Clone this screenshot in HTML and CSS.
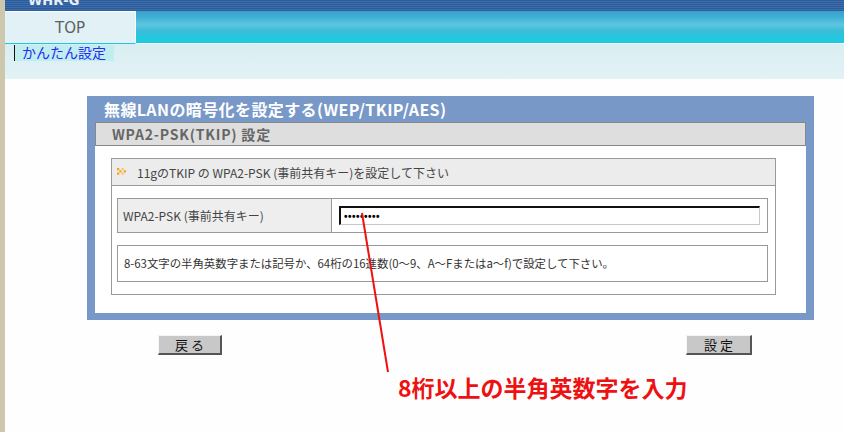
FILE: index.html
```html
<!DOCTYPE html>
<html lang="ja">
<head>
    <meta charset="UTF-8">
    <title>無線LANの暗号化を設定する</title>
    <link rel="stylesheet" href="styles.css">
</head>
<body>
    <div class="side-strip"></div>
    <div class="page">
        <div class="top-band"><span class="model">WHR-G</span></div>
        <div class="nav">
            <div class="tab">TOP</div>
            <div class="nav-fill"></div>
        </div>
        <div class="sub-nav"><span class="crumb">かんたん設定</span></div>

        <div class="content">
            <div class="panel">
                <div class="panel-title">無線LANの暗号化を設定する(WEP/TKIP/AES)</div>
                <div class="panel-head">WPA2-PSK(TKIP) 設定</div>
                <div class="panel-body">
                    <div class="inner">
                        <div class="inner-head">
                            <svg class="mark" width="8" height="8" viewBox="0 0 8 8">
                                <rect x="0" y="0" width="2" height="2" fill="#f7a21b"/>
                                <rect x="2" y="2" width="2" height="2" fill="#f7a21b"/>
                                <rect x="0" y="4" width="2" height="2" fill="#f7a21b"/>
                                <rect x="4" y="0" width="2" height="2" fill="#fbc46a"/>
                                <rect x="6" y="2" width="2" height="2" fill="#f7a21b"/>
                                <rect x="4" y="4" width="2" height="2" fill="#fbc46a"/>
                            </svg>
                            <span>11gのTKIP の WPA2-PSK (事前共有キー)を設定して下さい</span>
                        </div>
                        <div class="inner-body">
                            <div class="field-row">
                                <div class="field-label">WPA2-PSK (事前共有キー)</div>
                                <div class="field-value">
                                    <input class="key-input" type="password" value="123456789">
                                </div>
                            </div>
                            <div class="note">8-63文字の半角英数字または記号か、64桁の16進数(0～9、A～Fまたはa～f)で設定して下さい。</div>
                        </div>
                    </div>
                </div>
            </div>
            <div class="actions">
                <button class="btn btn-back">戻 る</button>
                <button class="btn btn-set">設 定</button>
            </div>
        </div>
    </div>

    <svg class="callout-line" width="844" height="432" viewBox="0 0 844 432">
        <line x1="362" y1="213" x2="388" y2="372" stroke="#ee1111" stroke-width="2"/>
    </svg>
    <div class="callout">8桁以上の半角英数字を入力</div>
</body>
</html>
```

FILE: styles.css
```css
body {
    margin: 0;
    width: 844px;
    height: 432px;
    overflow: hidden;
    display: flex;
    position: relative;
    background: #fefefe;
    font-family: "Noto Sans CJK JP", "DejaVu Sans", sans-serif;
    font-size: 12px;
    color: #333;
}
.side-strip {
    width: 5px;
    flex: none;
    background: #cdc8ad;
}
.page {
    flex: 1;
    display: flex;
    flex-direction: column;
}
.top-band {
    height: 11px;
    overflow: hidden;
    background: repeating-linear-gradient(to bottom, #2d5c98 0px, #2d5c98 1px, #3b6cab 1px, #3b6cab 2px);
}
.model {
    display: block;
    margin: -6px 0 0 23px;
    font-family: "DejaVu Sans", sans-serif;
    font-weight: bold;
    font-size: 13px;
    color: #e8eef8;
    line-height: 14px;
}
.nav {
    display: flex;
    height: 33px;
}
.tab {
    width: 130px;
    height: 31px;
    background: #e1f1f5;
    border-top: 1px solid #ffffff;
    border-right: 1px solid #ffffff;
    border-bottom: 1px solid #22c6da;
    text-align: center;
    line-height: 33px;
    font-family: "DejaVu Sans", sans-serif;
    font-size: 15px;
    color: #606060;
}
.nav-fill {
    flex: 1;
    height: 32px;
    border-bottom: 1px solid #ffffff;
    background: linear-gradient(to bottom, #3a9fcc 0%, #3fb0d6 20%, #5ec6e0 42%, #3cbcd8 62%, #22c8de 85%, #1ccbde 100%);
}
.sub-nav {
    height: 35px;
    background: linear-gradient(to bottom, #d9eef2, #e2f2f5);
}
.crumb {
    display: inline-block;
    margin-left: 9px;
    padding: 0 8px 0 7px;
    height: 16px;
    line-height: 15px;
    background: #bfeef0;
    border-left: 1px solid #111;
    font-size: 14px;
    color: #2a2af0;
}
.content {
    padding: 17px 0 0 82px;
}
.panel {
    width: 711px;
    padding: 0 8px 7px 8px;
    background: #7898c8;
}
.panel-title {
    height: 26px;
    line-height: 26px;
    padding-left: 9px;
    font-size: 16px;
    font-weight: bold;
    letter-spacing: 0.4px;
    color: #ffffff;
}
.panel-head {
    height: 22px;
    line-height: 22px;
    padding-left: 16px;
    background: #dedede;
    border: 1px solid #888;
    font-size: 14px;
    font-weight: bold;
    letter-spacing: 0.8px;
    color: #666;
}
.panel-body {
    background: #ffffff;
    padding: 12px 30px 18px 16px;
}
.inner {
    border: 1px solid #999;
}
.inner-head {
    height: 26px;
    display: flex;
    align-items: center;
    gap: 11px;
    padding-left: 5px;
    background: #ececec;
    border-bottom: 1px solid #999;
    color: #444;
}
.mark {
    width: 9px;
    height: 9px;
}
.inner-body {
    display: flex;
    flex-direction: column;
    gap: 12px;
    padding: 12px 7px 12px 5px;
}
.field-row {
    display: flex;
    height: 33px;
    border: 1px solid #999;
}
.field-label {
    width: 208px;
    padding-left: 5px;
    line-height: 33px;
    background: #eeeeee;
    border-right: 1px solid #999;
    color: #444;
}
.field-value {
    flex: 1;
    display: flex;
    align-items: center;
    padding-left: 7px;
}
.key-input {
    width: 412px;
    height: 16px;
    padding: 0 3px;
    border-top: 2px solid #111;
    border-left: 2px solid #111;
    border-right: 1px solid #c8c8c8;
    border-bottom: 1px solid #c8c8c8;
    font-size: 10px;
    font-weight: bold;
    letter-spacing: 0.5px;
    color: #000;
    outline: none;
}
.note {
    height: 35px;
    line-height: 35px;
    padding-left: 6px;
    border: 1px solid #999;
    font-size: 11.4px;
    color: #333;
}
.actions {
    display: flex;
    justify-content: space-between;
    width: 594px;
    margin: 15px 0 0 71px;
}
.btn {
    height: 20px;
    padding: 0;
    background: #c8c8c8;
    border-top: 1px solid #f4f4f4;
    border-left: 1px solid #f4f4f4;
    border-right: 2px solid #555;
    border-bottom: 2px solid #555;
    font-family: "Noto Sans CJK JP", sans-serif;
    font-size: 13px;
    line-height: 16px;
    color: #111;
}
.btn-back { width: 64px; }
.btn-set { width: 66px; }
.callout-line {
    position: absolute;
    left: 0;
    top: 0;
    pointer-events: none;
}
.callout {
    position: absolute;
    left: 398px;
    top: 370px;
    font-size: 23px;
    font-weight: bold;
    color: #ee1111;
}
```
